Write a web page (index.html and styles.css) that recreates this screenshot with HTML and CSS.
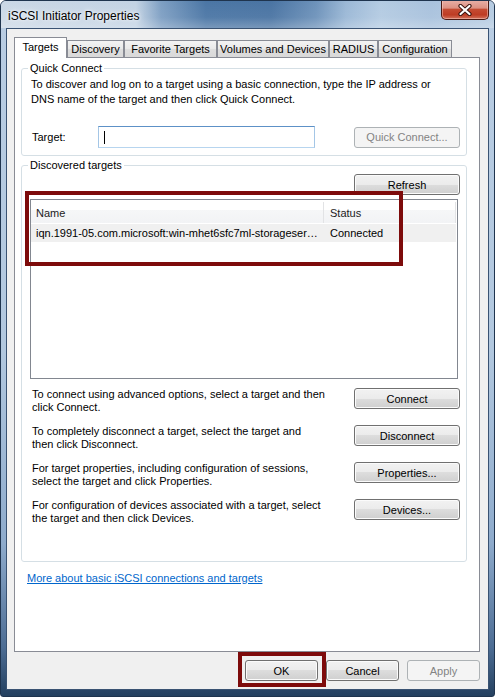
FILE: index.html
```html
<!DOCTYPE html>
<html>
<head>
<meta charset="utf-8">
<title>iSCSI Initiator Properties</title>
<link rel="stylesheet" href="styles.css">
</head>
<body>
<div class="window">
  <div class="titlebar">
    <span class="title">iSCSI Initiator Properties</span>
    <div class="close">
      <svg width="16" height="12" viewBox="0 0 16 12">
        <path d="M3.5 2 L12.5 10 M12.5 2 L3.5 10" stroke="#3a1410" stroke-width="4.2" stroke-linecap="round"/>
        <path d="M3.5 2 L12.5 10 M12.5 2 L3.5 10" stroke="#ffffff" stroke-width="2.2" stroke-linecap="round"/>
      </svg>
    </div>
  </div>
  <div class="client">
    <div class="tabs">
      <div class="tab active t-targets">Targets</div>
      <div class="tab t-discovery">Discovery</div>
      <div class="tab t-favorite">Favorite Targets</div>
      <div class="tab t-volumes">Volumes and Devices</div>
      <div class="tab t-radius">RADIUS</div>
      <div class="tab t-config">Configuration</div>
    </div>
    <div class="page">
      <fieldset class="group quick">
        <legend>Quick Connect</legend>
        <p class="desc">To discover and log on to a target using a basic connection, type the IP address or<br>DNS name of the target and then click Quick Connect.</p>
        <div class="target-row">
          <span class="target-label">Target:</span>
          <div class="input"><span class="caret"></span></div>
          <button class="btn btn-wide disabled">Quick Connect...</button>
        </div>
      </fieldset>
      <fieldset class="group discovered">
        <legend>Discovered targets</legend>
        <div class="refresh-row"><button class="btn btn-wide">Refresh</button></div>
        <div class="list">
          <div class="list-head">
            <span class="col-name">Name</span>
            <span class="col-status">Status</span>
          </div>
          <div class="list-row">
            <span class="col-name">iqn.1991-05.com.microsoft:win-mhet6sfc7ml-storageser…</span>
            <span class="col-status">Connected</span>
          </div>
          <div class="annot annot-list"></div>
        </div>
        <div class="action action-first">
          <p class="action-text">To connect using advanced options, select a target and then<br>click Connect.</p>
          <button class="btn btn-wide">Connect</button>
        </div>
        <div class="action">
          <p class="action-text">To completely disconnect a target, select the target and<br>then click Disconnect.</p>
          <button class="btn btn-wide">Disconnect</button>
        </div>
        <div class="action">
          <p class="action-text">For target properties, including configuration of sessions,<br>select the target and click Properties.</p>
          <button class="btn btn-wide">Properties...</button>
        </div>
        <div class="action">
          <p class="action-text">For configuration of devices associated with a target, select<br>the target and then click Devices.</p>
          <button class="btn btn-wide">Devices...</button>
        </div>
      </fieldset>
      <a class="more" href="#">More about basic iSCSI connections and targets</a>
    </div>
    <div class="footer">
      <div class="ok-wrap">
        <button class="btn btn-small">OK</button>
        <div class="annot annot-ok"></div>
      </div>
      <button class="btn btn-small">Cancel</button>
      <button class="btn btn-small disabled">Apply</button>
    </div>
  </div>
</div>
</body>
</html>
```

FILE: styles.css
```css
* { box-sizing: border-box; }
html, body { margin: 0; padding: 0; }
body {
  width: 495px;
  height: 697px;
  overflow: hidden;
  font-family: "Liberation Sans", Arial, sans-serif;
  font-size: 11px;
  color: #000;
  background: #ffffff;
}

.window {
  width: 495px;
  height: 697px;
  border: 1px solid #1f344e;
  border-radius: 6px 6px 3px 3px;
  padding: 0 5px 6px 5px;
  display: flex;
  flex-direction: column;
  overflow: hidden;
  background: linear-gradient(180deg, #b9cde3 0%, #b2c8df 50%, #8eabcc 78%, #4d6d94 93%, #24405f 100%);
}

.titlebar {
  height: 27px;
  margin: 0 -5px;
  padding: 0 5px 0 7px;
  display: flex;
  justify-content: space-between;
  align-items: flex-start;
  background:
    linear-gradient(180deg, rgba(255,255,255,0) 0%, rgba(255,255,255,0.05) 60%, rgba(255,255,255,0.25) 100%),
    linear-gradient(90deg, #cbd8e6 0px, #c3d3e4 135px, #7e9fc3 160px, #4b76a5 205px, #4a74a3 270px, #6d92ba 315px, #9bb8d6 345px, #b4cbe2 380px, #a9c2dd 430px, #b7cce2 495px);
}
.title {
  font-size: 12px;
  line-height: 16px;
  margin-top: 7px;
  color: #000;
  text-shadow: 0 0 6px rgba(255,255,255,0.9), 0 0 3px rgba(255,255,255,0.9);
}
.close {
  width: 48px;
  height: 20px;
  margin-top: -1px;
  border: 1px solid #4a1a14;
  border-top: none;
  border-radius: 0 0 5px 5px;
  display: flex;
  align-items: center;
  justify-content: center;
  background: linear-gradient(180deg, #e8b1a8 0%, #dc9183 42%, #c54b32 50%, #be3c24 78%, #d4735d 100%);
  box-shadow: inset 0 0 0 1px rgba(255,220,210,0.45);
}

.client {
  flex: 1;
  border: 1px solid #3a5373;
  background: #f0f0f0;
  display: flex;
  flex-direction: column;
}

.tabs {
  display: flex;
  align-items: flex-end;
  height: 20px;
  margin: 8px 0 0 7px;
}
.tab {
  height: 17px;
  border: 1px solid #898c95;
  border-bottom: none;
  line-height: 16px;
  text-align: center;
  white-space: nowrap;
  background: linear-gradient(180deg, #f3f3f3 0%, #e9e9e9 50%, #dedede 50%, #d9d9d9 100%);
}
.tab.active {
  height: 21px;
  margin-bottom: -1px;
  line-height: 18px;
  background: #ffffff;
  position: relative;
  z-index: 1;
}
.t-targets { width: 53px; }
.t-discovery { width: 57px; }
.t-favorite { width: 93px; }
.t-volumes { width: 112px; }
.t-radius { width: 49px; }
.t-config { width: 74px; }

.page {
  margin-left: 7px;
  width: 466px;
  height: 595px;
  border: 1px solid #898c95;
  background: #ffffff;
}

.group {
  margin: 0 0 0 6px;
  width: 446px;
  padding: 0;
  border: 1px solid #d5dfe5;
  border-radius: 3px;
}
.group legend {
  margin-left: 6px;
  padding: 0 2px;
  line-height: 14px;
}
.quick {
  margin-top: 3px;
  padding-bottom: 7px;
}
.desc {
  margin: 2px 0 0 9px;
  line-height: 15px;
}
.target-row {
  display: flex;
  align-items: center;
  height: 22px;
  margin-top: 19px;
}
.target-label {
  width: 76px;
  padding-left: 10px;
}
.input {
  width: 217px;
  height: 22px;
  border: 1px solid;
  border-color: #5d91c7 #a4c6e6 #b7d5ef #a4c6e6;
  background: #fff;
  display: flex;
  align-items: center;
  padding-left: 5px;
}
.caret {
  width: 1px;
  height: 13px;
  background: #000;
}
.target-row .btn { margin-left: 39px; }

.btn {
  height: 21px;
  border: 1px solid #707070;
  border-radius: 3px;
  padding: 0;
  font-family: "Liberation Sans", Arial, sans-serif;
  font-size: 11px;
  color: #000;
  background: linear-gradient(180deg, #f2f2f2 0%, #ebebeb 50%, #dddddd 50%, #cfcfcf 100%);
  box-shadow: inset 0 0 0 1px #fbfbfb;
}
.btn.disabled {
  border-color: #adb2b5;
  background: #f4f4f4;
  color: #838383;
  box-shadow: none;
}
.btn-wide { width: 106px; }
.btn-small { width: 73px; }

.discovered {
  margin-top: 2px;
  padding-bottom: 36px;
}
.refresh-row {
  display: flex;
  justify-content: flex-end;
  padding-right: 6px;
  margin-top: 2px;
}
.list {
  position: relative;
  margin: 4px 0 0 8px;
  width: 428px;
  height: 180px;
  border: 1px solid #828790;
  background: #fff;
}
.list-head, .list-row {
  display: flex;
  width: 425px;
  white-space: nowrap;
}
.list-head {
  height: 23px;
  padding-top: 2px;
  line-height: 22px;
  color: #222;
  background: linear-gradient(180deg, #ffffff 0%, #ffffff 42%, #f6f7f8 42%, #f2f3f5 100%);
}
.list-head .col-name { border-right: 1px solid #e2e3e5; }
.list-head .col-status { border-right: 1px solid #e2e3e5; }
.list-row {
  margin-top: 1px;
  height: 18px;
  line-height: 18px;
  background: #f0f0f0;
}
.col-name {
  width: 293px;
  padding-left: 5px;
  overflow: hidden;
}
.col-status {
  width: 132px;
  padding-left: 6px;
}

.annot {
  position: absolute;
  border: 4px solid #7d0b0b;
}
.annot-list {
  left: -6px;
  top: -9px;
  width: 378px;
  height: 75px;
}

.action {
  display: flex;
  align-items: flex-start;
  justify-content: space-between;
  margin-top: 11px;
  padding: 0 6px 0 10px;
}
.action.action-first { margin-top: 9px; }
.action-text {
  margin: 0;
  line-height: 13px;
}

.more {
  display: block;
  width: max-content;
  margin: 9px 0 0 12px;
  line-height: 14px;
  color: #0066cc;
  text-decoration: underline;
}

.footer {
  display: flex;
  justify-content: flex-end;
  gap: 8px;
  height: 21px;
  margin-top: 8px;
  padding-right: 8px;
}
.ok-wrap { position: relative; }
.annot-ok {
  left: -7px;
  top: -8px;
  width: 88px;
  height: 35px;
}
```
